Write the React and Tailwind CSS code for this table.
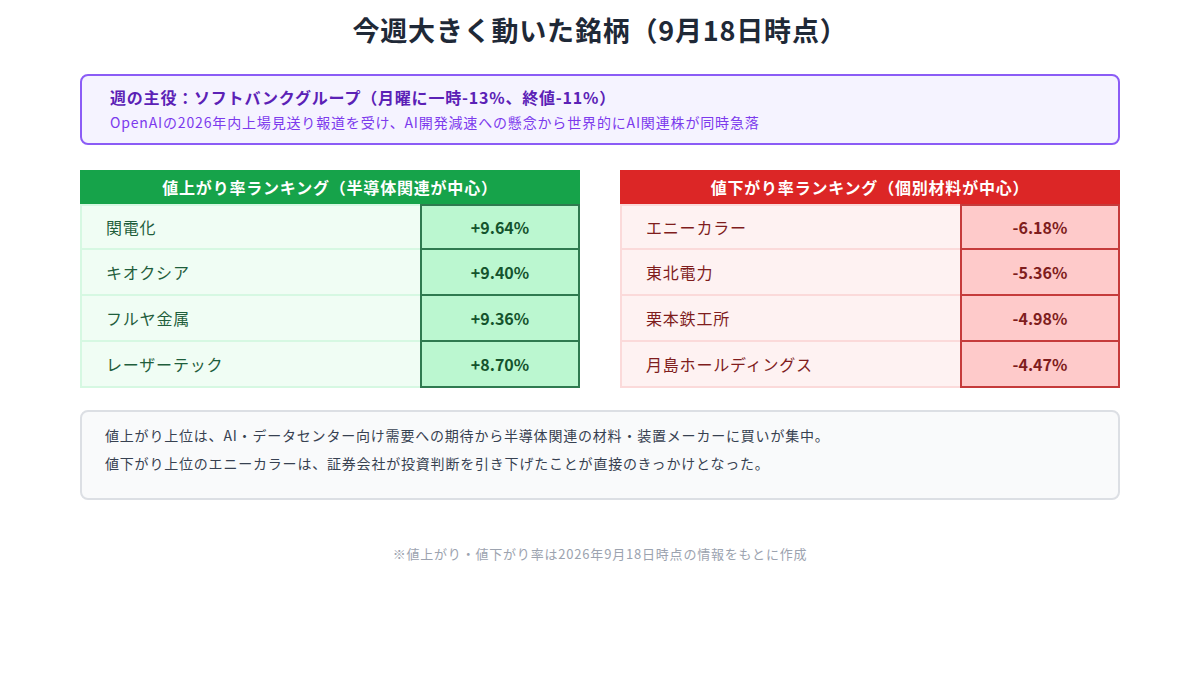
import React from "react";

const gainers = [
  { name: "関電化", rate: "+9.64%" },
  { name: "キオクシア", rate: "+9.40%" },
  { name: "フルヤ金属", rate: "+9.36%" },
  { name: "レーザーテック", rate: "+8.70%" },
];

const losers = [
  { name: "エニーカラー", rate: "-6.18%" },
  { name: "東北電力", rate: "-5.36%" },
  { name: "栗本鉄工所", rate: "-4.98%" },
  { name: "月島ホールディングス", rate: "-4.47%" },
];

const themes = {
  up: {
    head: "bg-[#16a34a]",
    nameCell: "bg-[#f0fdf4] border-[#d6f8e2] text-[#1f5e3c]",
    valueCell: "bg-[#bbf7d0] border-[#2f7a50] text-[#14532d]",
  },
  down: {
    head: "bg-[#dc2626]",
    nameCell: "bg-[#fef2f2] border-[#fbdada] text-[#7f1d1d]",
    valueCell: "bg-[#fecaca] border-[#c53b3b] text-[#7f1d1d]",
  },
};

const RankingTable = ({ title, rows, kind }) => {
  const t = themes[kind];
  return (
    <div className="flex-1 flex flex-col">
      {/* Header */}
      <div
        className={`h-[34px] flex items-center justify-center text-white font-bold text-[16px] ${t.head}`}
      >
        {title}
      </div>

      {/* Rows */}
      {rows.map((row, i) => (
        <div key={row.name} className="flex h-[46px]">
          <div
            className={`flex-1 flex items-center pl-[24px] text-[16px] border-l-2 border-b-2 ${
              i === 0 ? "border-t-2" : ""
            } ${t.nameCell}`}
          >
            {row.name}
          </div>
          <div
            className={`w-[160px] flex items-center justify-center font-bold text-[16px] tracking-normal border-x-2 border-b-2 ${
              i === 0 ? "border-t-2" : ""
            } ${t.valueCell}`}
          >
            {row.rate}
          </div>
        </div>
      ))}
    </div>
  );
};

export default function App() {
  return (
    <div
      className="w-[1200px] min-h-[675px] bg-white tracking-[0.05em]"
      style={{ fontFamily: '"Noto Sans CJK JP", "Noto Sans", sans-serif' }}
    >
      <div className="w-[1040px] mx-auto pt-[10px]">
        {/* Title */}
        <h1 className="text-[27px] leading-[40px] font-bold text-[#1f2937] text-center">
          今週大きく動いた銘柄（9月18日時点）
        </h1>

        {/* Highlight */}
        <div className="mt-[24px] border-2 border-[#8b5cf6] bg-[#f5f3ff] rounded-lg pl-[28px] pr-6 pt-[10px] pb-[11px]">
          <p className="text-[16px] leading-[22px] font-bold text-[#5b21b6]">
            週の主役：ソフトバンクグループ（月曜に一時-13%、終値-11%）
          </p>
          <p className="mt-[4px] text-[14px] leading-[20px] tracking-[0.06em] text-[#7c3aed]">
            OpenAIの2026年内上場見送り報道を受け、AI開発減速への懸念から世界的にAI関連株が同時急落
          </p>
        </div>

        {/* Rankings */}
        <div className="mt-[25px] flex gap-10">
          <RankingTable
            title="値上がり率ランキング（半導体関連が中心）"
            rows={gainers}
            kind="up"
          />
          <RankingTable
            title="値下がり率ランキング（個別材料が中心）"
            rows={losers}
            kind="down"
          />
        </div>

        {/* Notes */}
        <div className="mt-[22px] h-[90px] border-2 border-[#dcdfe4] bg-[#f9fafb] rounded-lg pl-[23px] pt-[9px] text-[14px] leading-[28px] text-[#374151]">
          <p>
            値上がり上位は、AI・データセンター向け需要への期待から半導体関連の材料・装置メーカーに買いが集中。
          </p>
          <p>
            値下がり上位のエニーカラーは、証券会社が投資判断を引き下げたことが直接のきっかけとなった。
          </p>
        </div>

        {/* Footer */}
        <p className="mt-[44px] text-center text-[13px] leading-[20px] text-[#9ca3af]">
          ※値上がり・値下がり率は2026年9月18日時点の情報をもとに作成
        </p>
      </div>
    </div>
  );
}
